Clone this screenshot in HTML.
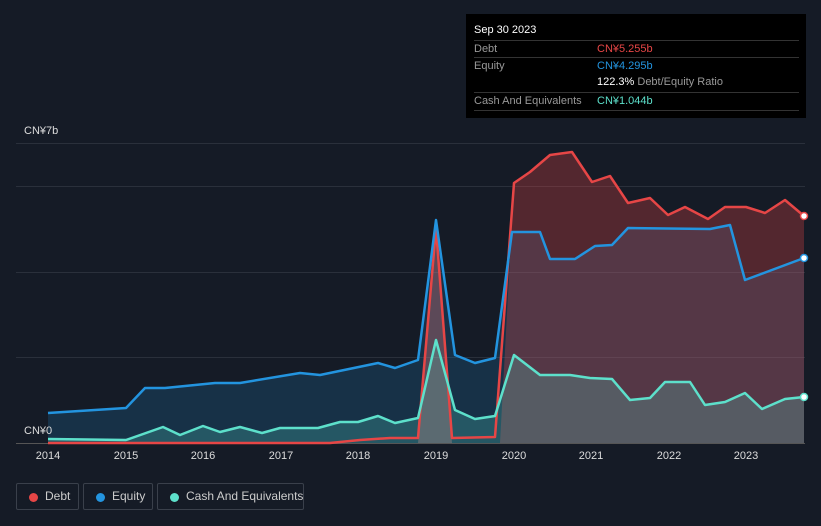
<!DOCTYPE html><html><head><style>
html,body{margin:0;width:821px;height:526px;overflow:hidden}
body{background:#151b26;font-family:"Liberation Sans",sans-serif;position:relative}
.tt{position:absolute;left:466px;top:14px;width:340px;height:104px;background:#000;color:#fff;font-size:11px}
.r{position:absolute;left:8px;width:325px;border-top:1px solid #333;height:17px;line-height:17px}
.l{color:#999;position:absolute;left:0}.v{position:absolute;left:123px;white-space:nowrap}
.lg{position:absolute;top:483px;height:27px;border:1px solid #3a404b;border-radius:2px;color:#ccc;font-size:12px;line-height:25px;box-sizing:border-box;white-space:nowrap}
.lg i{position:absolute;left:12px;top:9px;width:9px;height:9px;border-radius:50%}
.ax{position:absolute;top:450px;color:#ddd;font-size:11px;width:40px;text-align:center}
</style></head><body>
<svg width="821" height="526" style="position:absolute;left:0;top:0">
<g stroke="#2a303b" stroke-width="1"><line x1="16" x2="805" y1="143.5" y2="143.5"/><line x1="16" x2="805" y1="186.5" y2="186.5"/><line x1="16" x2="805" y1="272.5" y2="272.5"/><line x1="16" x2="805" y1="357.5" y2="357.5"/></g>
<polygon fill="rgba(35,148,223,0.18)" points="48,443 48,413 126,408 145,388 165,388 215,383 240,383 300,373 320,375 378,363 395,368 418,360 436,220 455,355 475,363 495,358 512,232 540,232 550,259 575,259 595,246 612,245 628,228 710,229 730,225 745,280 804,258 804,443"/>
<polygon fill="rgba(230,70,70,0.3)" points="500,443 514,183 530,172 550,155 572,152 592,182 610,176 628,203 650,198 668,215 685,207 708,219 725,207 746,207 765,213 785,200 804,216 804,443"/>
<polygon fill="rgba(220,120,120,0.35)" points="418,443 436,228 452,443"/>
<polygon fill="rgba(93,224,203,0.22)" points="48,443 48,439 126,440 163,427 180,435 203,426 220,432 240,427 262,433 280,428 318,428 340,422 358,422 378,416 395,423 418,418 436,340 455,410 475,419 495,416 514,355 540,375 570,375 590,378 612,379 630,400 650,398 665,382 690,382 705,405 725,402 745,393 762,409 785,399 804,397 804,443"/>
<line x1="16" x2="805" y1="443.5" y2="443.5" stroke="#555"/>
<g fill="none" stroke-width="2.5" stroke-linejoin="round">
<polyline stroke="#e64646" points="48,443 126,443 330,443 360,440 390,438 418,438 436,228 452,438 495,437 514,183 530,172 550,155 572,152 592,182 610,176 628,203 650,198 668,215 685,207 708,219 725,207 746,207 765,213 785,200 804,216"/>
<polyline stroke="#2394df" points="48,413 126,408 145,388 165,388 215,383 240,383 300,373 320,375 378,363 395,368 418,360 436,220 455,355 475,363 495,358 512,232 540,232 550,259 575,259 595,246 612,245 628,228 710,229 730,225 745,280 804,258"/>
<polyline stroke="#5de0cb" points="48,439 126,440 163,427 180,435 203,426 220,432 240,427 262,433 280,428 318,428 340,422 358,422 378,416 395,423 418,418 436,340 455,410 475,419 495,416 514,355 540,375 570,375 590,378 612,379 630,400 650,398 665,382 690,382 705,405 725,402 745,393 762,409 785,399 804,397"/>
</g>
<circle cx="804" cy="216" r="3.5" fill="#fff" stroke="#e64646" stroke-width="1.5"/>
<circle cx="804" cy="258" r="3.5" fill="#fff" stroke="#2394df" stroke-width="1.5"/>
<circle cx="804" cy="397" r="3.5" fill="#fff" stroke="#5de0cb" stroke-width="1.5"/>
</svg>
<div style="position:absolute;left:24px;top:125px;color:#ddd;font-size:11px">CN¥7b</div>
<div style="position:absolute;left:24px;top:425px;color:#ddd;font-size:11px">CN¥0</div>
<div class="ax" style="left:28px">2014</div><div class="ax" style="left:106px">2015</div><div class="ax" style="left:183px">2016</div><div class="ax" style="left:261px">2017</div><div class="ax" style="left:338px">2018</div><div class="ax" style="left:416px">2019</div><div class="ax" style="left:494px">2020</div><div class="ax" style="left:571px">2021</div><div class="ax" style="left:649px">2022</div><div class="ax" style="left:726px">2023</div>
<div class="tt">
<div style="position:absolute;left:8px;top:10px;font-size:11px">Sep 30 2023</div>
<div class="r" style="top:26px"><span class="l">Debt</span><span class="v" style="color:#e64646">CN¥5.255b</span></div>
<div class="r" style="top:43px"><span class="l">Equity</span><span class="v" style="color:#2394df">CN¥4.295b</span></div>
<div class="r" style="top:60px;border-top:none"><span class="v">122.3% <span style="color:#999">Debt/Equity Ratio</span></span></div>
<div class="r" style="top:78px"><span class="l">Cash And Equivalents</span><span class="v" style="color:#5de0cb">CN¥1.044b</span></div>
<div class="r" style="top:96px;height:0"></div>
</div>
<div class="lg" style="left:16px;width:63px"><i style="background:#e64646"></i><span style="position:absolute;left:28px">Debt</span></div>
<div class="lg" style="left:83px;width:70px"><i style="background:#2394df"></i><span style="position:absolute;left:28px">Equity</span></div>
<div class="lg" style="left:157px;width:147px"><i style="background:#5de0cb"></i><span style="position:absolute;left:28px">Cash And Equivalents</span></div>
</body></html>
